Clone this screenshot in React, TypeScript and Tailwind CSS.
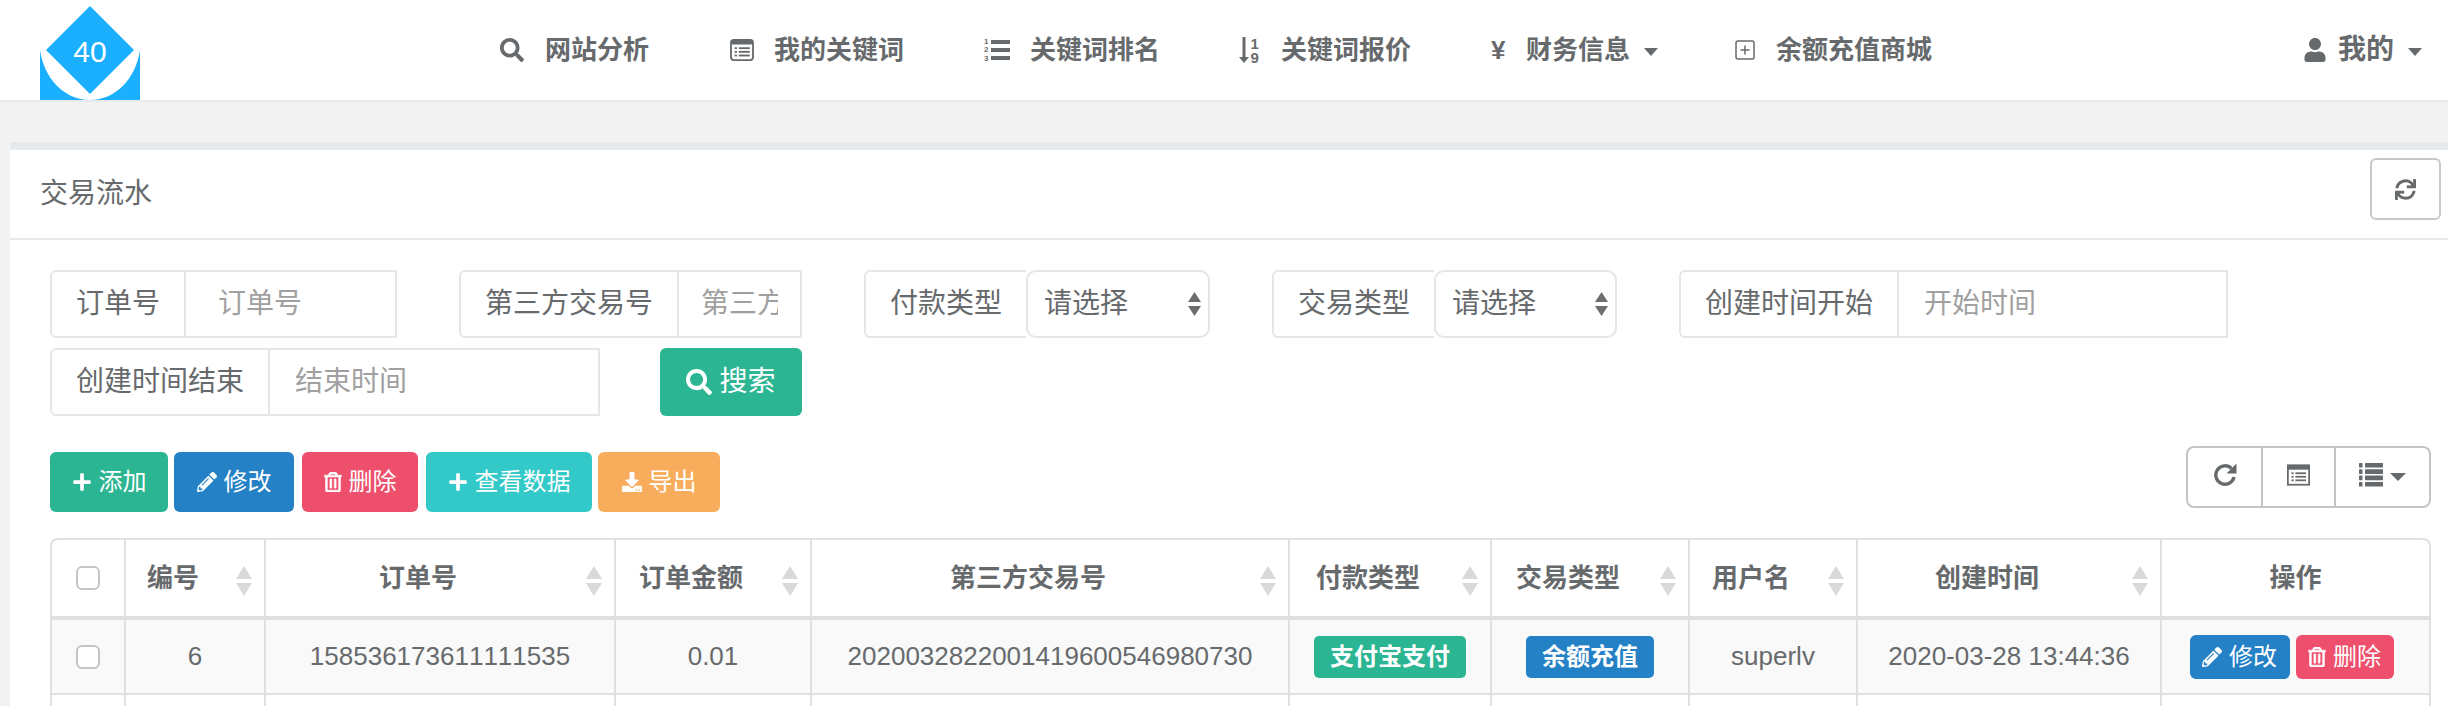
import { FaSearch, FaUser, FaSync, FaPlus, FaPencilAlt, FaRegTrashAlt, FaDownload } from "react-icons/fa";
import { SquarePlus } from "lucide-react";
import type { ReactNode } from "react";

const font = "[font-family:'Liberation_Sans','Noto_Sans_CJK_SC',sans-serif]";

// font-awesome 4 glyphs the icon packages don't carry
function ListAltIcon({ rx, className }: { rx: number; className: string }) {
  return (
    <svg viewBox="0 0 26 24" className={className} fill="currentColor">
      <rect x="1" y="1" width="24" height="22" rx={rx} fill="none" stroke="currentColor" strokeWidth="2" />
      <rect x="1" y="1" width="24" height="5" rx={rx} />
      {[9, 13, 17].map((y) => (
        <g key={y}>
          <rect x="5" y={y} width="2.5" height="2" />
          <rect x="9.5" y={y} width="12" height="2" />
        </g>
      ))}
    </svg>
  );
}

function ListOlIcon({ className }: { className: string }) {
  return (
    <svg viewBox="0 0 26 26" className={className} fill="currentColor">
      {[7, 15, 24].map((y, i) => (
        <text key={y} x="0" y={y} fontSize="8" fontFamily="Liberation Sans">{i + 1}</text>
      ))}
      <rect x="7" y="3" width="19" height="4" />
      <rect x="7" y="11" width="19" height="4" />
      <rect x="7" y="19" width="19" height="4" />
    </svg>
  );
}

function SortNumIcon({ className }: { className: string }) {
  return (
    <svg viewBox="0 0 22 26" className={className} fill="currentColor">
      <path d="M3.5 0H6.5V20H10L5 26 0 20H3.5Z" />
      <text x="11.5" y="12" fontSize="15" fontFamily="Liberation Sans">1</text>
      <text x="11.5" y="26" fontSize="15" fontFamily="Liberation Sans">9</text>
    </svg>
  );
}

function RepeatIcon({ className }: { className: string }) {
  return (
    <svg viewBox="0 0 24 24" className={className} fill="currentColor">
      <path d="M18.5 5.5A9.2 9.2 0 1 0 21 14" fill="none" stroke="currentColor" strokeWidth="3.4" />
      <path d="M23.5 0.5V10.5H13.5Z" />
    </svg>
  );
}

function ThListIcon({ className }: { className: string }) {
  return (
    <svg viewBox="0 0 24 24" className={className} fill="currentColor">
      {[0, 6.3, 12.6, 18.9].map((y) => (
        <g key={y}>
          <rect x="0" y={y} width="3.5" height="4.6" rx="0.6" />
          <rect x="6" y={y} width="18" height="4.6" rx="0.6" />
        </g>
      ))}
    </svg>
  );
}

function NavItem({ icon, label, caret, className }: { icon: ReactNode; label: string; caret?: boolean; className: string }) {
  return (
    <div className={`flex items-center font-bold text-[26px] text-[#676a6c] ${className}`}>
      {icon}
      <span>{label}</span>
      {caret && <span className="ml-[14px] mt-[3px] border-x-[7px] border-x-transparent border-t-[8px] border-t-[#676a6c]" />}
    </div>
  );
}

function Field({ label, placeholder, className, pad = "px-[25px]" }: { label: string; placeholder: string; className: string; pad?: string }) {
  return (
    <div className={`flex h-[68px] text-[28px] text-[#676a6c] ${className}`}>
      <div className="flex items-center px-[24px] border-2 border-[#e5e6e7] rounded-l-[6px] whitespace-nowrap">{label}</div>
      <input
        placeholder={placeholder}
        className={`flex-1 min-w-0 border-2 border-l-0 border-[#e5e6e7] outline-none placeholder:text-[#a0a0a0] ${pad}`}
      />
    </div>
  );
}

function SelectField({ label, className }: { label: string; className: string }) {
  return (
    <div className={`flex h-[68px] text-[28px] text-[#676a6c] ${className}`}>
      <div className="flex items-center px-[24px] border-2 border-r-0 border-[#e5e6e7] rounded-l-[6px] whitespace-nowrap">{label}</div>
      <div className="relative flex-1">
        <select className="w-full h-full appearance-none border-2 border-[#e5e6e7] rounded-[10px] pl-[16px] outline-none text-[#676a6c] bg-white">
          <option>请选择</option>
        </select>
        <svg viewBox="0 0 13 24" className="absolute right-[9px] top-[22px] w-[13px] h-[24px] fill-[#6b6d6f]">
          <path d="M6.5 0 13 10H0ZM6.5 24 0 14H13Z" />
        </svg>
      </div>
    </div>
  );
}

function Btn({ color, icon, label, className }: { color: string; icon: ReactNode; label: string; className: string }) {
  return (
    <button className={`flex items-center justify-center gap-[7px] rounded-[6px] text-white text-[24px] ${color} ${className}`}>
      {icon}
      <span>{label}</span>
    </button>
  );
}

function Sort() {
  return (
    <svg viewBox="0 0 16 30" className="absolute right-[12px] top-[26px] w-[16px] h-[30px] fill-[#d9d9d9]">
      <path d="M8 0 16 13H0ZM8 30 0 17H16Z" />
    </svg>
  );
}

const columns = [
  { label: "编号", w: "w-[140px]", sort: true },
  { label: "订单号", w: "w-[350px]", sort: true },
  { label: "订单金额", w: "w-[196px]", sort: true },
  { label: "第三方交易号", w: "w-[478px]", sort: true },
  { label: "付款类型", w: "w-[202px]", sort: true },
  { label: "交易类型", w: "w-[198px]", sort: true },
  { label: "用户名", w: "w-[168px]", sort: true },
  { label: "创建时间", w: "w-[304px]", sort: true },
  { label: "操作", w: "", sort: false },
];

const checkbox = <div className="mx-auto w-[24px] h-[24px] rounded-[6px] border-2 border-[#c4c4c4] bg-white" />;
const td = "border-l-2 border-[#e0e0e0] text-center p-0";
const trashIcon = <FaRegTrashAlt stroke="currentColor" strokeWidth={14} className="w-[18px] h-[20px]" />;

export default function App() {
  return (
    <div className={`w-[2448px] h-[706px] overflow-hidden bg-[#f3f3f4] ${font}`}>
      {/* top nav */}
      <div className="h-[102px] bg-white border-b-2 border-[#e7eaec] flex items-center relative">
        <svg viewBox="0 0 100 94" className="absolute left-[40px] top-[6px] w-[100px] h-[94px]">
          <path d="M0 44C4 72 24 94 50 94C76 94 96 72 100 44V94H0Z" fill="#1aafff" />
          <path d="M50 0 94 44 50 88 6 44Z" fill="#1aafff" />
          <text x="50" y="56" textAnchor="middle" fontSize="30" fill="#fff" fontFamily="Liberation Sans">40</text>
        </svg>
        <NavItem className="ml-[500px]" icon={<FaSearch className="w-[24px] h-[24px] mr-[21px]" />} label="网站分析" />
        <NavItem className="ml-[80px]" icon={<ListAltIcon rx={3} className="w-[26px] h-[22px] mr-[19px]" />} label="我的关键词" />
        <NavItem className="ml-[80px]" icon={<ListOlIcon className="w-[26px] h-[26px] mr-[20px]" />} label="关键词排名" />
        <NavItem className="ml-[79px]" icon={<SortNumIcon className="w-[22px] h-[26px] mr-[20px]" />} label="关键词报价" />
        <NavItem className="ml-[80px]" icon={<span className="w-[16px] mr-[19px] text-[26px] leading-none">¥</span>} label="财务信息" caret />
        <NavItem className="ml-[75px]" icon={<SquarePlus strokeWidth={1.5} className="w-[24px] h-[24px] mr-[19px]" />} label="余额充值商城" />
        <NavItem className="ml-auto mr-[26px] !text-[28px]" icon={<FaUser className="w-[22px] h-[24px] mr-[12px]" />} label="我的" caret />
      </div>

      {/* panel */}
      <div className="mt-[40px] ml-[10px] bg-white border-t-[8px] border-[#e7eaec]">
        <div className="h-[90px] border-b-2 border-[#e7eaec] flex items-center justify-between pl-[30px] pr-[7px]">
          <span className="text-[28px] text-[#676a6c]">交易流水</span>
          <button className="w-[71px] h-[62px] -mt-[10px] flex items-center justify-center border-2 border-[#c8c8c8] rounded-[6px] text-[#676a6c]">
            <FaSync className="w-[21px] h-[21px]" />
          </button>
        </div>

        <div className="pt-[30px] pl-[40px] pr-[7px]">
          {/* search form */}
          <div className="flex flex-wrap gap-x-[62px] gap-y-[10px]">
            <Field className="w-[347px]" label="订单号" placeholder="订单号" pad="px-[32px]" />
            <Field className="w-[343px]" label="第三方交易号" placeholder="第三方交易号" pad="px-[22px]" />
            <SelectField className="w-[346px]" label="付款类型" />
            <SelectField className="w-[345px]" label="交易类型" />
            <Field className="w-[549px]" label="创建时间开始" placeholder="开始时间" />
            <Field className="w-[550px]" label="创建时间结束" placeholder="结束时间" />
            <Btn className="w-[142px] h-[68px] -ml-[2px] !text-[28px]" color="bg-[#2cb592]" icon={<FaSearch className="w-[26px] h-[26px]" />} label="搜索" />
          </div>

          {/* toolbar */}
          <div className="mt-[30px] w-[2381px] flex items-start">
            <div className="flex mt-[6px]">
              <Btn className="w-[118px] h-[60px]" color="bg-[#2cb592]" icon={<FaPlus className="w-[20px] h-[20px]" />} label="添加" />
              <Btn className="w-[120px] h-[60px] ml-[6px]" color="bg-[#2481c6]" icon={<FaPencilAlt className="w-[20px] h-[20px]" />} label="修改" />
              <Btn className="w-[116px] h-[60px] ml-[8px]" color="bg-[#ed4f6d]" icon={trashIcon} label="删除" />
              <Btn className="w-[166px] h-[60px] ml-[8px]" color="bg-[#33c9c9]" icon={<FaPlus className="w-[20px] h-[20px]" />} label="查看数据" />
              <Btn className="w-[122px] h-[60px] ml-[6px]" color="bg-[#f8ad5d]" icon={<FaDownload className="w-[20px] h-[20px]" />} label="导出" />
            </div>
            <div className="ml-auto flex h-[62px] w-[245px] border-2 border-[#c4c4c4] rounded-[8px] text-[#676a6c]">
              <div className="w-[73px] flex items-center justify-center"><RepeatIcon className="w-[24px] h-[24px] -mt-[4px]" /></div>
              <div className="w-[75px] border-x-2 border-[#c4c4c4] flex items-center justify-center"><ListAltIcon rx={0} className="w-[23px] h-[24px] -mt-[4px]" /></div>
              <div className="flex-1 flex items-center justify-center gap-[7px]">
                <ThListIcon className="w-[24px] h-[24px] -mt-[4px]" />
                <span className="border-x-[8px] border-x-transparent border-t-[8px] border-t-[#676a6c]" />
              </div>
            </div>
          </div>

          {/* table */}
          <div className="mt-[26px] w-[2381px] border-x-2 border-t-2 border-[#e0e0e0] rounded-t-[8px] overflow-hidden">
            <table className="w-full table-fixed border-collapse text-[26px] text-[#676a6c]">
              <thead>
                <tr className="h-[78px] border-b-[4px] border-[#e0e0e0]">
                  <th className="w-[73px] p-0 font-normal">{checkbox}</th>
                  {columns.map((c) => (
                    <th key={c.label} className={`relative font-bold ${td} ${c.w} ${c.sort ? "pr-[44px]" : ""}`}>
                      {c.label}
                      {c.sort && <Sort />}
                    </th>
                  ))}
                </tr>
              </thead>
              <tbody>
                <tr className="h-[76px] bg-[#f9f9f9] border-b-2 border-[#e0e0e0]">
                  <td className="p-0">{checkbox}</td>
                  <td className={td}>6</td>
                  <td className={`${td} [font-kerning:none]`}>158536173611111535</td>
                  <td className={td}>0.01</td>
                  <td className={td}>2020032822001419600546980730</td>
                  <td className={td}>
                    <span className="inline-block w-[152px] h-[42px] leading-[42px] rounded-[5px] bg-[#2cb592] text-white font-bold text-[24px]">支付宝支付</span>
                  </td>
                  <td className={td}>
                    <span className="inline-block w-[128px] h-[42px] leading-[42px] rounded-[5px] bg-[#2481c6] text-white font-bold text-[24px]">余额充值</span>
                  </td>
                  <td className={td}>superlv</td>
                  <td className={td}>2020-03-28 13:44:36</td>
                  <td className={td}>
                    <div className="flex justify-center gap-[6px] pr-[8px]">
                      <Btn className="w-[100px] h-[44px]" color="bg-[#2481c6]" icon={<FaPencilAlt className="w-[20px] h-[20px]" />} label="修改" />
                      <Btn className="w-[98px] h-[44px]" color="bg-[#ed4f6d]" icon={trashIcon} label="删除" />
                    </div>
                  </td>
                </tr>
                <tr className="h-[40px] bg-white">
                  <td />
                  {columns.map((c) => (
                    <td key={c.label} className={td} />
                  ))}
                </tr>
              </tbody>
            </table>
          </div>
        </div>
      </div>
    </div>
  );
}
